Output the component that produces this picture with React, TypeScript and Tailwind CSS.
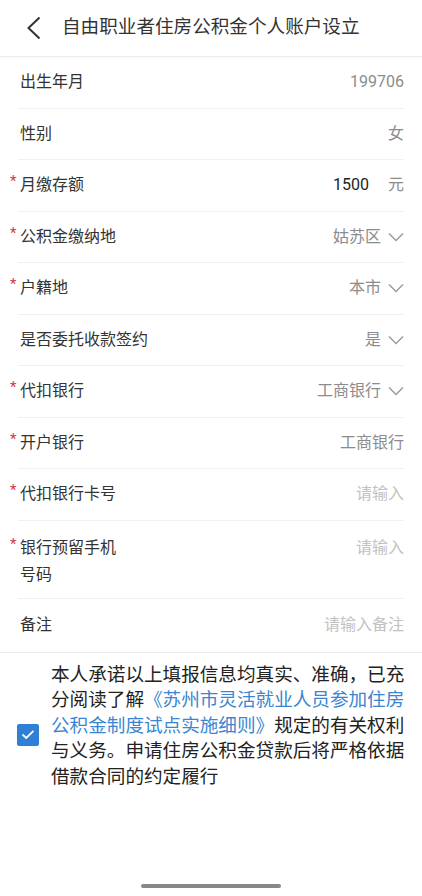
import React from "react";

type Row = {
  label: string;
  value?: string;
  placeholder?: boolean;
  required?: boolean;
  select?: boolean;
  unit?: string;
};

const rows: Row[] = [
  { label: "出生年月", value: "199706" },
  { label: "性别", value: "女" },
  { label: "月缴存额", value: "1500", unit: "元", required: true },
  { label: "公积金缴纳地", value: "姑苏区", required: true, select: true },
  { label: "户籍地", value: "本市", required: true, select: true },
  { label: "是否委托收款签约", value: "是", select: true },
  { label: "代扣银行", value: "工商银行", required: true, select: true },
  { label: "开户银行", value: "工商银行", required: true },
  { label: "代扣银行卡号", value: "请输入", required: true, placeholder: true },
];

function Chevron() {
  return (
    <svg width="16" height="10" viewBox="0 0 16 10" className="ml-[7px] shrink-0">
      <path d="M1 1.5 L8 8.5 L15 1.5" fill="none" stroke="#9a9a9a" strokeWidth="1.4" />
    </svg>
  );
}

function Star() {
  return (
    <span className="absolute left-[-10px] top-[-3px] text-[15px] text-[#d23a48]">*</span>
  );
}

function FormRow({ row }: { row: Row }) {
  return (
    <div className="mx-[18px] flex h-[51.5px] items-center justify-between border-b border-[#f0f0f0] pl-[2px]">
      <span className="relative text-[16px] text-[#333]">
        {row.required && <Star />}
        {row.label}
      </span>
      <div className="flex items-center text-[16px]">
        {row.unit ? (
          <>
            <span className="text-[#222]">{row.value}</span>
            <span className="ml-[19px] text-[#8c8c8c]">{row.unit}</span>
          </>
        ) : (
          <span className={row.placeholder ? "text-[#c2c2c2]" : "text-[#8c8c8c]"}>{row.value}</span>
        )}
        {row.select && <Chevron />}
      </div>
    </div>
  );
}

export default function App() {
  return (
    <div
      className="flex h-[896px] w-[422px] flex-col bg-white"
      style={{ fontFamily: 'Roboto, "Noto Sans CJK SC", sans-serif' }}
    >
      <div className="flex h-[57px] items-center border-b border-[#ececec] shadow-[0_1px_2px_rgba(0,0,0,0.04)]">
        <svg width="16" height="24" viewBox="0 0 16 24" className="ml-[26px]">
          <path d="M13.5 1.5 L2.5 12 L13.5 22.5" fill="none" stroke="#333" strokeWidth="2" />
        </svg>
        <h1 className="ml-[20px] text-[18.6px] text-[#333]">自由职业者住房公积金个人账户设立</h1>
      </div>

      {rows.map((r) => (
        <FormRow key={r.label} row={r} />
      ))}

      <div className="mx-[18px] flex h-[78px] items-start justify-between border-b border-[#f0f0f0] pl-[2px] pt-[13px]">
        <span className="relative w-[100px] text-[16px] leading-[27px] text-[#333]">
          <Star />
          银行预留手机号码
        </span>
        <span className="text-[16px] leading-[27px] text-[#c2c2c2]">请输入</span>
      </div>

      <div className="flex h-[54px] items-center justify-between border-b border-[#ececec] pl-[20px] pr-[18px]">
        <span className="text-[16px] text-[#333]">备注</span>
        <span className="text-[16px] text-[#c2c2c2]">请输入备注</span>
      </div>

      <div className="flex items-start pl-[17px] pt-[10px]">
        <div className="mt-[61px] flex h-[22px] w-[22px] shrink-0 items-center justify-center rounded-[2px] bg-[#2f7fd4]">
          <svg width="14" height="11" viewBox="0 0 14 11">
            <path d="M1.5 5.5 L5.2 9 L12.5 1.8" fill="none" stroke="#fff" strokeWidth="1.8" />
          </svg>
        </div>
        <p className="ml-[12px] w-[357px] text-[18.6px] leading-[25.5px] text-[#222]">
          本人承诺以上填报信息均真实、准确，已充分阅读了解
          <span className="text-[#3a86d2]">《苏州市灵活就业人员参加住房公积金制度试点实施细则》</span>
          规定的有关权利与义务。申请住房公积金贷款后将严格依据借款合同的约定履行
        </p>
      </div>

      <div className="flex-1" />
      <div className="mb-[8px] flex justify-center">
        <div className="h-[4px] w-[140px] rounded-full bg-[#888]" />
      </div>
    </div>
  );
}
